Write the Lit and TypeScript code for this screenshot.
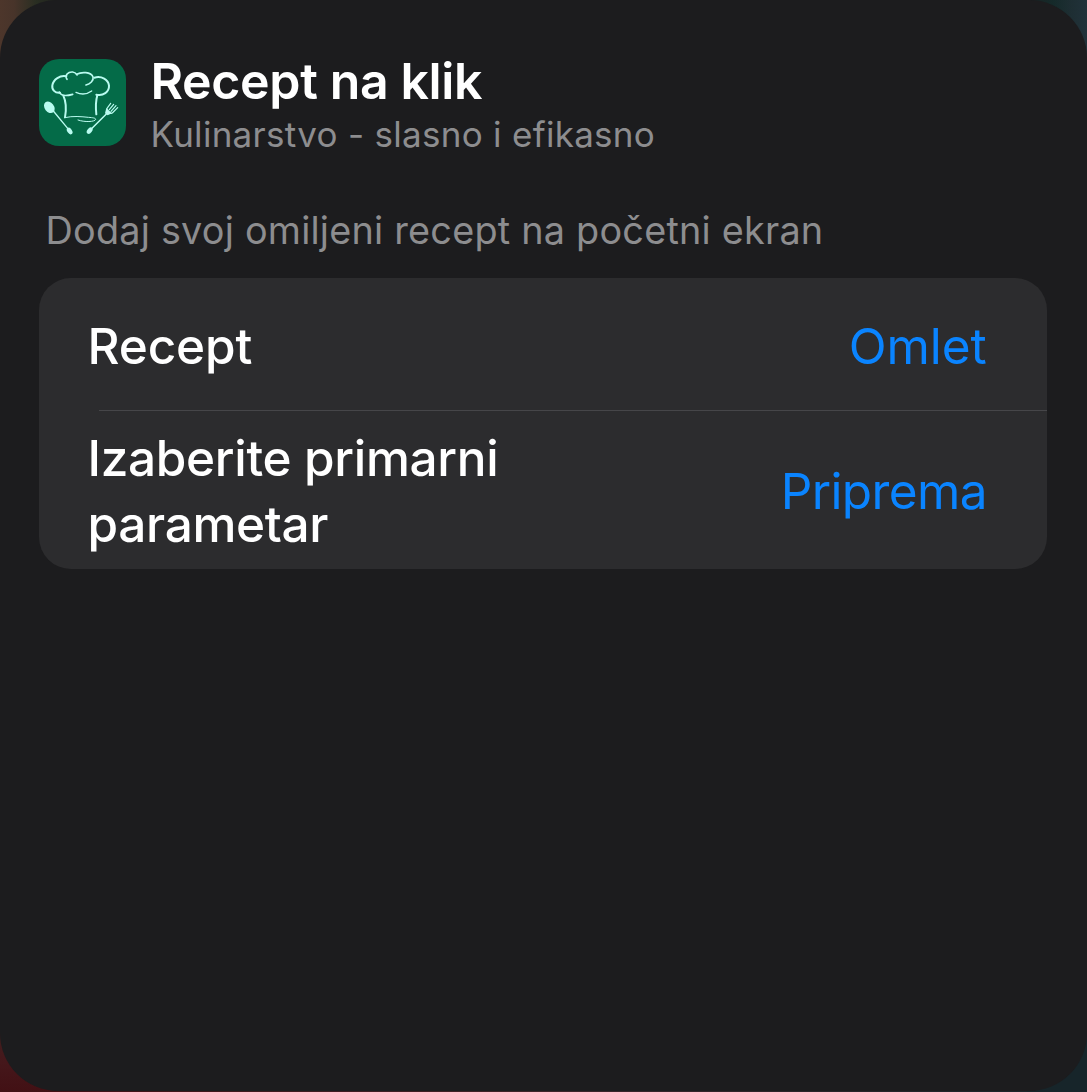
import { LitElement, html, css, svg } from "lit";
import { customElement, property } from "lit/decorators.js";

const chefHat = svg`
  <g fill="none" stroke="#b9fbf0" stroke-linecap="round" stroke-linejoin="round">
    <path stroke-width="6" d="M97 67C78 63 58 76 55 94C53 107 63 118 78 116"/>
    <path stroke-width="5" d="M99 76C91 64 102 53 116 54C122 55 127 59 129 63"/>
    <path stroke-width="5" d="M128 61C142 53 171 53 177 69C180 80 168 90 156 93"/>
    <path stroke-width="6" d="M181 71C203 65 223 77 225 95C226 114 207 127 187 122"/>
    <path stroke-width="5" d="M76 114C80 124 95 127 116 121"/>
    <path stroke-width="4" d="M126 115C141 122 159 121 173 111"/>
    <path stroke-width="6" d="M88 125C95 140 98 163 93 190"/>
    <path stroke-width="6" d="M190 124C185 141 185 162 187 181"/>
    <path stroke-width="3" d="M92 191C117 185 143 188 163 190C177 191 185 192 185 196C183 204 151 205 132 198"/>
    <path stroke-width="4" d="M58 171L106 229"/>
    <path stroke-width="4.5" d="M220 177L168 229"/>
    <path stroke-width="3.5" d="M219 163C216 176 224 181 235 177M219 163L230 148M226 167L239 151M231 172L246 155M235 177L251 161"/>
  </g>
  <g fill="#b9fbf0">
    <ellipse cx="46" cy="160" rx="14" ry="19" transform="rotate(-38 46 160)"/>
    <ellipse cx="107" cy="231" rx="7" ry="11" transform="rotate(-35 107 231)"/>
    <ellipse cx="167" cy="230" rx="7" ry="11" transform="rotate(38 167 230)"/>
    <path d="M217 162L234 178L221 184L213 178Z"/>
  </g>`;

@customElement("option-row")
class OptionRow extends LitElement {
  @property() label = "";
  @property() value = "";

  static styles = css`
    :host {
      display: flex;
      align-items: center;
      justify-content: space-between;
      box-sizing: border-box;
      padding: 0 60px 0 48.5px;
      font-size: 49.5px;
      line-height: 66px;
    }
    .label {
      max-width: 480px;
      color: #fff;
      font-weight: 530;
      letter-spacing: var(--label-tracking, 0);
    }
    .value {
      color: #0a84ff;
      letter-spacing: var(--value-tracking, 0);
    }
  `;

  render() {
    return html`<span class="label">${this.label}</span><span class="value">${this.value}</span>`;
  }
}

@customElement("app-root")
class AppRoot extends LitElement {
  static styles = css`
    :host {
      display: block;
      height: 1092px;
      overflow: hidden;
      font-family: Inter, "Liberation Sans", sans-serif;
      background:
        linear-gradient(90deg, #4d362b 0, #48342a 14px, #292e22 36px, #1e201e 60px) 0 0 / 60px 60px no-repeat,
        linear-gradient(270deg, #21323a 0, #1e2e33 16px, #152a2a 34px, #1a2020 60px) 100% 0 / 60px 60px no-repeat,
        linear-gradient(0deg, #421014 0, #45171b 30px, #40201f 60px) 0 100% / 60px 60px no-repeat,
        linear-gradient(#17252a, #17252a) 100% 100% / 60px 60px no-repeat,
        linear-gradient(90deg, #421014, #3d2529 50%, #17252a);
    }
    .sheet {
      box-sizing: border-box;
      height: 1091px;
      padding: 59px 40px 0 39px;
      border-radius: 58px;
      background: #1c1c1e;
    }
    .header {
      display: flex;
      gap: 24.5px;
      height: 87px;
    }
    .icon {
      flex: none;
      width: 87px;
      height: 87px;
      border-radius: 20px;
      background: #046b48;
    }
    .titles {
      display: flex;
      flex-direction: column;
      margin-top: -8px;
      white-space: nowrap;
    }
    .title {
      color: #fff;
      font-size: 50px;
      font-weight: 620;
      letter-spacing: -0.36px;
      line-height: 60px;
    }
    .subtitle {
      color: #8d8d8f;
      font-size: 35px;
      letter-spacing: 0.29px;
      line-height: 46px;
    }
    .caption {
      margin: 60px 0 0 6.5px;
      color: #8d8d8f;
      font-size: 37.8px;
      letter-spacing: 0.22px;
      line-height: 48px;
      white-space: nowrap;
    }
    .card {
      display: flex;
      flex-direction: column;
      height: 291px;
      margin-top: 24px;
      border-radius: 32px;
      background: #2c2c2e;
    }
    .first {
      --label-tracking: -0.15px;
      --value-tracking: -0.1px;
      height: 132px;
      padding-top: 4px;
      padding-right: 60.5px;
    }
    .line {
      height: 1px;
      margin-left: 60px;
      background: #464649;
    }
    .second {
      --label-tracking: -0.33px;
      --value-tracking: -0.6px;
      height: 158px;
      padding-top: 2px;
    }
  `;

  render() {
    return html`
      <main class="sheet">
        <header class="header">
          <svg class="icon" viewBox="15 15 261 261" aria-hidden="true">${chefHat}</svg>
          <div class="titles">
            <span class="title">Recept na klik</span>
            <span class="subtitle">Kulinarstvo - slasno i efikasno</span>
          </div>
        </header>
        <div class="caption">Dodaj svoj omiljeni recept na početni ekran</div>
        <section class="card">
          <option-row class="first" label="Recept" value="Omlet"></option-row>
          <div class="line"></div>
          <option-row class="second" label="Izaberite primarni parametar" value="Priprema"></option-row>
        </section>
      </main>
    `;
  }
}
